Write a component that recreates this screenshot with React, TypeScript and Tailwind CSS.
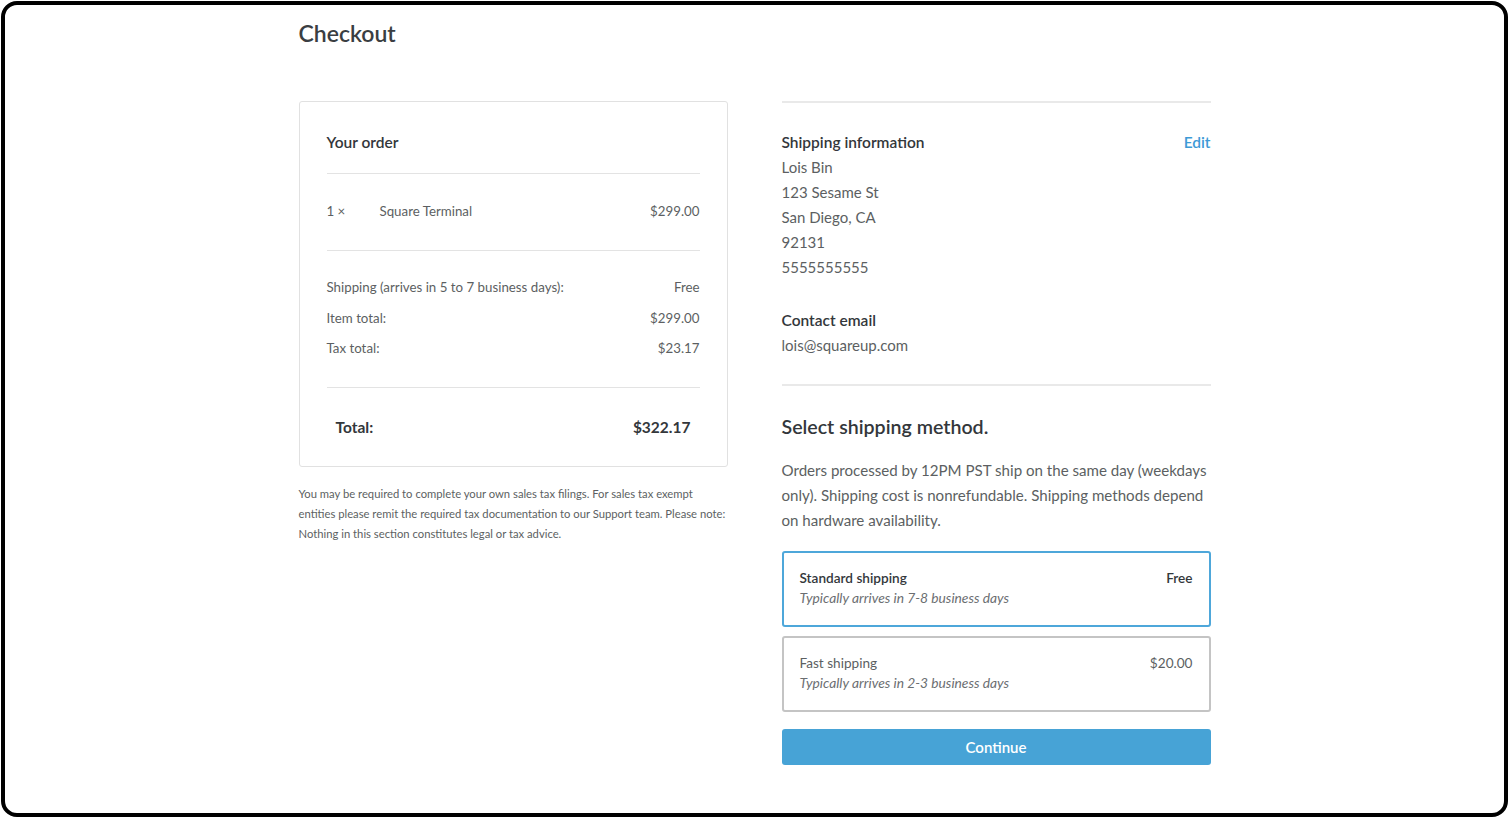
import React from 'react'

const font = { fontFamily: 'Lato, "Liberation Sans", Arial, sans-serif' }

function Row({ label, value }: { label: string; value: string }) {
  return (
    <div className="flex items-center justify-between h-[30.5px] text-[13.3px] text-[#5c5f62]">
      <span>{label}</span>
      <span>{value}</span>
    </div>
  )
}

function ShippingOption({
  title,
  price,
  note,
  selected,
}: {
  title: string
  price: string
  note: string
  selected?: boolean
}) {
  return (
    <div
      className={
        selected
          ? 'h-[76px] rounded-[3px] border-2 border-[#4ea7da] px-[16px] pt-[15px]'
          : 'h-[76px] rounded-[3px] border-2 border-[#c4c4c4] px-[16px] pt-[15px]'
      }
    >
      <div className="flex justify-between text-[13.6px] leading-[20px]">
        <span className={selected ? 'font-semibold text-[#33373b]' : 'text-[#5c5f62]'}>{title}</span>
        <span className={selected ? 'font-semibold text-[#33373b]' : 'text-[#5c5f62]'}>{price}</span>
      </div>
      <div className="text-[13.8px] leading-[20px] italic text-[#6b6e71]">{note}</div>
    </div>
  )
}

export default function App() {
  return (
    <div className="w-[1509px] h-[818px] bg-white p-[1px]" style={font}>
      <div className="h-full rounded-[16px] border-4 border-black bg-white">
        <div className="mx-auto w-[912px] -mt-[4px]">
          <h1 className="pt-[18px] h-[100px] text-[23px] leading-[28px] font-semibold text-[#3a3e42]">Checkout</h1>

          <div className="flex gap-[54px]">
            {/* left column */}
            <div className="w-[429px]">
              <div className="h-[366px] rounded-[3px] border border-[#e1e1e1] px-[27px]">
                <div className="h-[71px] pt-[29px] text-[15.5px] leading-[22px] font-semibold text-[#33373b]">Your order</div>
                <div className="border-t border-[#e3e3e3]" />
                <div className="h-[76px] flex items-center text-[13.3px] text-[#5c5f62]">
                  <span className="w-[53px]">1 ×</span>
                  <span className="flex-1">Square Terminal</span>
                  <span>$299.00</span>
                </div>
                <div className="border-t border-[#e3e3e3]" />
                <div className="pt-[22px] h-[136px]">
                  <Row label="Shipping (arrives in 5 to 7 business days):" value="Free" />
                  <Row label="Item total:" value="$299.00" />
                  <Row label="Tax total:" value="$23.17" />
                </div>
                <div className="border-t border-[#e3e3e3]" />
                <div className="h-[79px] flex items-center justify-between px-[9px] text-[15.5px] font-bold text-[#33373b]">
                  <span>Total:</span>
                  <span>$322.17</span>
                </div>
              </div>
              <p className="mt-[17px] text-[11.25px] leading-[20px] text-[#5c5f62]">
                You may be required to complete your own sales tax filings. For sales tax exempt entities please remit the
                required tax documentation to our Support team. Please note: Nothing in this section constitutes legal or
                tax advice.
              </p>
            </div>

            {/* right column */}
            <div className="w-[429px]">
              <div className="border-t-2 border-[#e9e9e9]" />
              <div className="pt-[27px] flex justify-between text-[15.5px] leading-[25px]">
                <span className="font-semibold text-[#33373b]">Shipping information</span>
                <span className="font-semibold text-[#3d9ad6]">Edit</span>
              </div>
              <div className="text-[15px] leading-[25px] text-[#5c5f62]">
                <div>Lois Bin</div>
                <div>123 Sesame St</div>
                <div>San Diego, CA</div>
                <div>92131</div>
                <div>5555555555</div>
              </div>
              <div className="pt-[28px] text-[15.5px] leading-[25px] font-semibold text-[#33373b]">Contact email</div>
              <div className="text-[15px] leading-[25px] text-[#5c5f62]">lois@squareup.com</div>
              <div className="mt-[26px] border-t-2 border-[#e9e9e9]" />
              <h2 className="pt-[27px] text-[19.6px] leading-[28px] font-semibold text-[#33373b]">Select shipping method.</h2>
              <p className="mt-[17px] text-[15.1px] leading-[25px] text-[#5c5f62]">
                Orders processed by 12PM PST ship on the same day (weekdays only). Shipping cost is nonrefundable.
                Shipping methods depend on hardware availability.
              </p>
              <div className="mt-[18px] flex flex-col gap-[9px]">
                <ShippingOption selected title="Standard shipping" price="Free" note="Typically arrives in 7-8 business days" />
                <ShippingOption title="Fast shipping" price="$20.00" note="Typically arrives in 2-3 business days" />
              </div>
              <button className="mt-[17px] w-full h-[36px] rounded-[3px] bg-[#47a3d6] text-[15px] font-semibold text-white">
                Continue
              </button>
            </div>
          </div>
        </div>
      </div>
    </div>
  )
}
